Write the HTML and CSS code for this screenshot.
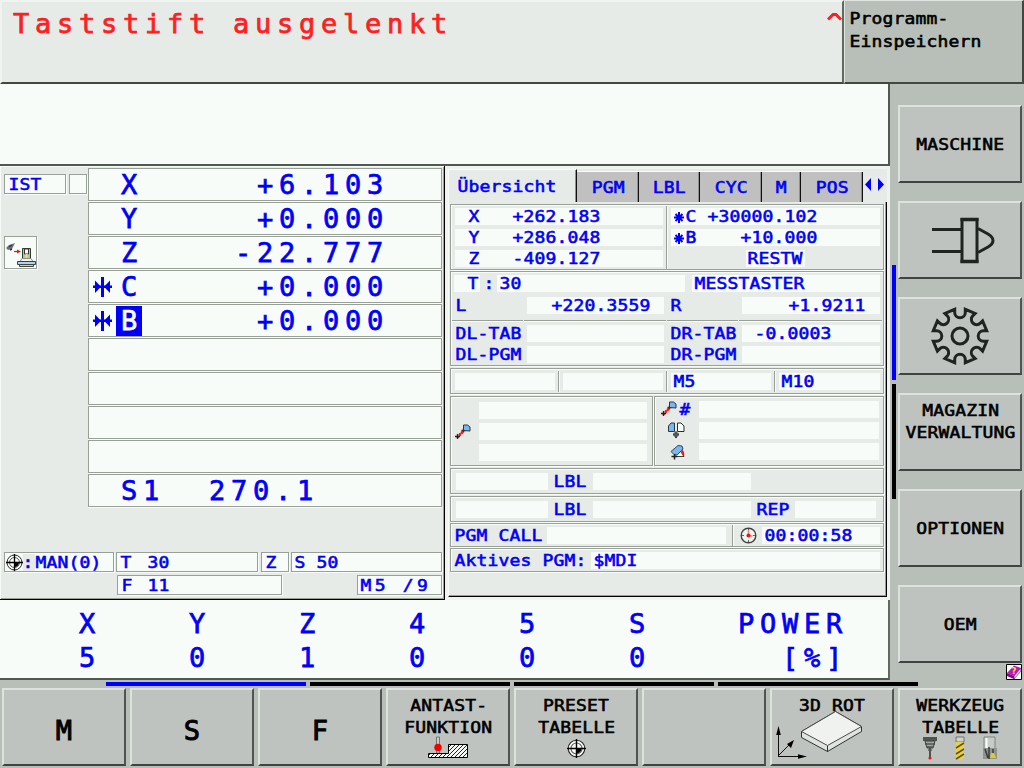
FILE: index.html
```html
<!DOCTYPE html>
<html lang="de">
<head>
<meta charset="utf-8">
<title>Taststift ausgelenkt</title>
<link rel="stylesheet" href="styles.css">
</head>
<body>
<svg class="defs" width="0" height="0">
  <defs>
    <g id="sync"><path d="M8 0h3v20H8zM0 8.5h19v2.500H0z"/><path d="M2 3.500l6 6.200-6 6.200zM17 3.500l-6 6.200 6 6.200z"/></g>
    <g id="star"><path d="M5 0v11M0 5.500h10M1.500 2l7 7M8.500 2l-7 7" fill="none" stroke="#0000f8" stroke-width="2"/></g>
    <g id="probe"><path d="M7 9L13 3" stroke="#f81010" stroke-width="2" stroke-dasharray="2 1" transform="translate(-5 5)"/><path d="M0 12.500h5M2.500 10v5M6.500 6.500h4M8.500 4.500v4" stroke="#202020" stroke-width="1.300"/><path d="M4 11l4-4" stroke="#f81010" stroke-width="2" stroke-dasharray="2.500 .8"/><path d="M8.500 6.500V1h4l2.500 2v4z" fill="#78b8f0" stroke="#283840"/></g>
    <g id="target"><circle cx="8.500" cy="8.500" r="7.500" fill="#f8fcf8" stroke="#282828" stroke-width="1"/><circle cx="8.500" cy="8.500" r="5" fill="none" stroke="#585858" stroke-width="1"/><path d="M8.500 8.500V13a4.500 4.500 0 0 0 4.500-4.500z" fill="#000"/><path d="M8.500 0v17M0 8.500h17" stroke="#000" stroke-width="1.300"/></g>
  </defs>
</svg>
<div class="screen">
  <header class="header">
    <div class="message"><span class="big">Taststift ausgelenkt</span>
      <svg class="caret" width="15" height="9" viewBox="0 0 15 9"><path d="M1 7.500L6 2.500h3l5 5" fill="none" stroke="#fc2020" stroke-width="3"/></svg>
    </div>
    <div class="mode"><span class="t">Programm-</span><span class="t">Einspeichern</span></div>
  </header>

  <div class="middle">
    <main class="work">
      <div class="blank"></div>
      <div class="panels">
        <section class="position">
          <div class="upper">
            <div class="side">
              <div class="ist-row"><div class="box ist"><span class="t">IST</span></div><div class="box small"></div></div>
              <div class="box override">
                <svg width="31" height="31" viewBox="0 0 31 31">
                  <path d="M1 11l3-3 6-2-3 6-4 1z" fill="#707470"/><path d="M4 10l3-2M5 13l2-1" stroke="#303070" stroke-width="1.500"/>
                  <path d="M9 14.500h4" stroke="#f01010" stroke-width="1.200"/><path d="M12 12.500l4 2-4 2z" fill="#f01010"/>
                  <path d="M17.500 21.500v-10h8v10z" fill="#b8bcb8" stroke="#303830"/><path d="M19.500 12h4v5h-4z" fill="#fff" stroke="#303830"/><path d="M20.500 17h2v4h-2z" fill="#e8e870"/>
                  <path d="M15 24.500l2-3h9l2 3z" fill="#f0f4f0" stroke="#889088"/><path d="M12.500 24.500h18v3h-18z" fill="#b8d0f0" stroke="#304050"/><path d="M14.500 27.500h14v2h-14z" fill="#c8ccc8" stroke="#404840"/>
                </svg>
              </div>
            </div>
            <div class="axes">
              <div class="axis"><i></i><b class="big">X</b><span class="big">+6.103</span></div>
              <div class="axis"><i></i><b class="big">Y</b><span class="big">+0.000</span></div>
              <div class="axis"><i></i><b class="big">Z</b><span class="big">-22.777</span></div>
              <div class="axis"><svg class="sync" width="19" height="20"><use href="#sync"/></svg><b class="big">C</b><span class="big">+0.000</span></div>
              <div class="axis"><svg class="sync" width="19" height="20"><use href="#sync"/></svg><b class="big selected">B</b><span class="big">+0.000</span></div>
              <div class="axis"></div><div class="axis"></div><div class="axis"></div><div class="axis"></div>
              <div class="axis spindle"><span class="big">S1  270.1</span></div>
            </div>
          </div>
          <div class="status">
            <div class="box man"><svg width="17" height="17"><use href="#target"/></svg><span class="colon"><span class="t">:</span></span><span class="t">MAN(0)</span></div>
            <div class="box"><span class="t">T</span><span class="t num">30</span></div>
            <div class="box"><span class="t">Z</span></div>
            <div class="box"><span class="t">S 50</span></div>
          </div>
          <div class="status second">
            <div class="box"><span class="t">F</span><span class="t num">11</span></div>
            <div class="box"><span class="t spaced">M5 /9</span></div>
          </div>
        </section>

        <section class="overview">
          <nav class="tabs">
            <div class="tab active"><span class="t">Übersicht</span></div>
            <div class="tab"><span class="t">PGM</span></div>
            <div class="tab"><span class="t">LBL</span></div>
            <div class="tab"><span class="t">CYC</span></div>
            <div class="tab"><span class="t">M</span></div>
            <div class="tab"><span class="t">POS</span></div>
            <svg class="arrows" width="20" height="13" viewBox="0 0 20 13"><path d="M6 0v13L0 6.500zM13 0v13l6-6.500z"/></svg>
          </nav>
          <div class="sheet">
            <div class="group coords">
              <div class="rows">
                <div class="field"><span class="t">X</span><span class="t">+262.183</span></div>
                <div class="field"><span class="t">Y</span><span class="t">+286.048</span></div>
                <div class="field"><span class="t">Z</span><span class="t">-409.127</span></div>
              </div>
              <div class="divider"></div>
              <div class="rows rotary">
                <div class="field"><svg width="10" height="11"><use href="#star"/></svg><span class="t">C</span><span class="t">+30000.102</span></div>
                <div class="field"><svg width="10" height="11"><use href="#star"/></svg><span class="t">B</span><span class="t">   +10.000</span></div>
                <div class="field restw"><span class="t">RESTW</span></div>
              </div>
            </div>

            <div class="group tool">
              <div class="toolname">
                <div class="field tcell"><span class="t">T</span></div><div class="label sep"><span class="t">:</span></div>
                <div class="field txt"><span class="t">30</span></div><i></i><div class="field txt"><span class="t">MESSTASTER</span></div>
              </div>
              <div class="quad">
                <div class="label"><span class="t">L</span></div><div class="field len"><span class="t">+220.3559</span></div>
                <div class="label r"><span class="t">R</span></div><div class="field rad"><span class="t">+1.9211</span></div>
              </div>
              <div class="rule"><i></i><i></i><i></i><i></i></div>
              <div class="quad">
                <div class="label"><span class="t">DL-TAB</span></div><div class="field"></div>
                <div class="label r"><span class="t">DR-TAB</span></div><div class="field delta"><span class="t">-0.0003</span></div>
                <div class="label"><span class="t">DL-PGM</span></div><div class="field"></div>
                <div class="label r"><span class="t">DR-PGM</span></div><div class="field"></div>
              </div>
            </div>

            <div class="group mfunc">
              <div class="field"></div><div class="divider"></div><div class="field"></div><div class="divider"></div>
              <div class="field txt"><span class="t">M5</span></div><div class="divider"></div><div class="field txt"><span class="t">M10</span></div>
            </div>

            <div class="pair">
              <div class="group datum">
                <svg width="16" height="16"><use href="#probe"/></svg>
                <div class="stack"><div class="field"></div><div class="field"></div><div class="field"></div></div>
              </div>
              <div class="group transform">
                <div class="icons">
                  <div class="numbered"><svg width="16" height="16"><use href="#probe"/></svg><span class="t">#</span></div>
                  <svg width="17" height="17" viewBox="0 0 17 17"><path d="M.5 9.500V4L3 1h3.500v8.500z" fill="#78b8f0" stroke="#283840"/><path d="M9.500 9.500V1H13l3 3v5.500z" fill="#f8fcf8" stroke="#283028"/><path d="M8 9.500v6.500M5 12.500h6" stroke="#383838" stroke-width="2"/><circle cx="8" cy="12.500" r="2.500" fill="#585858"/></svg>
                  <svg class="rot" width="16" height="16" viewBox="0 0 16 16"><path d="M4 12.500l6-6 4 6z" fill="#f8fcf8" stroke="#384038"/><path d="M1 7.500L8 1.500 12 2l1 3-6 6-3-.5z" fill="#78b8f0" stroke="#304860"/><path d="M1.500 12.500h6M4.500 10v5.500" stroke="#202020" stroke-width="1.500"/><path d="M11.500 6.500q2 1 2 5" stroke="#f01010" stroke-width="1.800" fill="none"/></svg>
                </div>
                <div class="stack"><div class="field"></div><div class="field"></div><div class="field"></div></div>
              </div>
            </div>

            <div class="group repeat"><div class="field"></div><div class="label"><span class="t">LBL</span></div><div class="field"></div></div>
            <div class="group repeat"><div class="field"></div><div class="label"><span class="t">LBL</span></div><div class="field"></div><div class="label"><span class="t">REP</span></div><div class="field"></div></div>
            <div class="group call">
              <div class="label"><span class="t">PGM CALL</span></div><div class="field"></div><div class="divider"></div>
              <svg width="17" height="17" viewBox="0 0 17 17"><circle cx="8.500" cy="8.500" r="7.300" fill="#f0f4f0" stroke="#404440" stroke-width="1.400"/><path d="M8.500 2v2M8.500 13v2M2 8.500h2M13 8.500h2" stroke="#606460"/><path d="M8.500 3v6h4" fill="none" stroke="#f08080" stroke-width="1.400"/><circle cx="8.500" cy="8.500" r="2" fill="#f81010"/></svg>
              <div class="field txt"><span class="t">00:00:58</span></div>
            </div>
            <div class="group active-pgm"><div class="label"><span class="t">Aktives PGM:</span></div><div class="field txt"><span class="t">$MDI</span></div></div>
          </div>
        </section>
      </div>

      <section class="load">
        <span class="big">X</span><span class="big">Y</span><span class="big">Z</span><span class="big">4</span><span class="big">5</span><span class="big">S</span><span class="big power">POWER</span>
        <span class="big">5</span><span class="big">0</span><span class="big">1</span><span class="big">0</span><span class="big">0</span><span class="big">0</span><span class="big power">[%]</span>
      </section>
    </main>

    <aside class="right">
      <div class="vbars"><i class="on"></i><i></i></div>
      <div class="vkeys">
        <button class="key"><span class="t">MASCHINE</span></button>
        <button class="key">
          <svg class="plug" width="64" height="48" viewBox="0 0 64 48"><g fill="none" stroke="#202420" stroke-width="3"><path d="M1 12.500h29M1 34.500h29M47 11.500l10 5.500q5 3 5 6.500t-5 6.500l-10 5.500"/><rect x="31" y="2.500" width="15" height="42"/><path d="M29.500 2.500h18M29.500 44.500h18" stroke-width="3.500"/></g></svg>
        </button>
        <button class="key">
          <svg class="gear" width="60" height="60" viewBox="-30 -30 60 60"><g fill="none" stroke="#202420" stroke-width="3" stroke-linejoin="miter"><path d="M-5.300-26.700V-23.500A5.300 5.300 0 0 0 5.300-23.500V-26.700L15.100-22.600 12.900-20.400A5.300 5.300 0 0 0 20.400-12.900L22.600-15.100 26.700-5.300H23.500A5.300 5.300 0 0 0 23.500 5.300H26.700L22.600 15.100 20.400 12.900A5.300 5.300 0 0 0 12.900 20.400L15.100 22.600 5.300 26.700V23.500A5.300 5.300 0 0 0-5.300 23.500V26.700L-15.100 22.600-12.900 20.400A5.300 5.300 0 0 0-20.400 12.900L-22.600 15.100-26.700 5.300H-23.500A5.300 5.300 0 0 0-23.500-5.300H-26.700L-22.600-15.100-20.400-12.900A5.300 5.300 0 0 0-12.900-20.400L-15.100-22.600z"/><circle r="8"/></g></svg>
        </button>
        <button class="key top"><span class="t">MAGAZIN</span><span class="t">VERWALTUNG</span></button>
        <button class="key"><span class="t">OPTIONEN</span></button>
        <button class="key"><span class="t">OEM</span></button>
        <svg class="help" width="16" height="16" viewBox="0 0 16 16"><path d="M.5.5h15v15H.5z" fill="#f8fcf8" stroke="#000"/><path d="M1 9l7-7.500L15 4l-7 8z" fill="#c010c0"/><path d="M1 9l7 3v3L1 12z" fill="#800880"/><path d="M8 12l7-8v3l-7 8z" fill="#d8d8d8" stroke="#601060" stroke-width=".6"/><text x="5.500" y="9.500" font-family="DejaVu Sans" font-weight="bold" font-size="8.500" fill="#ffe820">?</text></svg>
      </div>
    </aside>
  </div>

  <footer class="footer">
    <div class="hbars"><i class="on"></i><i></i><i></i><i></i></div>
    <div class="hkeys">
      <button class="key"><span class="big letter">M</span></button>
      <button class="key"><span class="big letter">S</span></button>
      <button class="key"><span class="big letter">F</span></button>
      <button class="key top"><span class="t">ANTAST-</span><span class="t">FUNKTION</span>
        <svg class="raised" width="40" height="23" viewBox="0 0 40 23"><defs><pattern id="hatch" width="4" height="4" patternUnits="userSpaceOnUse"><path d="M-1 5L5-1M-1 1l2-2M3 5l2-2" stroke="#101010" stroke-width=".9"/></pattern></defs><path d="M8.500 1h3v16h-3z" fill="#c8ccc8" stroke="#707870"/><path d="M.5 17.500h20v-9h19v13H.5z" fill="#f4f8f4"/><path d="M.5 17.500h20v-9h19v13H.5z" fill="url(#hatch)" stroke="#000"/><circle cx="10" cy="11.500" r="3.700" fill="#f80000"/></svg>
      </button>
      <button class="key top"><span class="t">PRESET</span><span class="t">TABELLE</span>
        <svg class="preset" width="21" height="21" viewBox="-1 -1 19 19"><use href="#target"/></svg>
      </button>
      <button class="key"></button>
      <button class="key top rot3d"><span class="t">3D ROT</span>
        <svg width="96" height="52" viewBox="0 0 96 52"><path d="M8.500 47.500V22M8 47.500h24M8 47l13-13" stroke="#101010" fill="none"/><path d="M8.500 17l2.300 9H6.200zM37 47.500l-9-2.300v4.600zM24 31l-3 8-4-4z" fill="#000"/><path d="M31.500 22.500L65.500 2.500l26 15v5l-34 20-26-14z" fill="#e0e4e0" stroke="#303430"/><path d="M31.500 22.500l34-20 26 15-34 19z" fill="#f0f2f0" stroke="#484c48"/><path d="M57.500 37v6" stroke="#303430"/></svg>
      </button>
      <button class="key top"><span class="t">WERKZEUG</span><span class="t">TABELLE</span>
        <svg class="raised" width="76" height="24" viewBox="0 0 76 24"><path d="M1 1h14v4H1z" fill="#505450"/><path d="M3 5h10l-2 7H5z" fill="#a0a4a0" stroke="#404440"/><path d="M3 8h10M5 11h6M6 14h4" stroke="#303430"/><path d="M8 12v10" stroke="#505450" stroke-width="2"/><circle cx="8" cy="22" r="1.600" fill="#f81010"/><path d="M34 1h8v5h-8z" fill="#d0d4d0" stroke="#707470"/><path d="M34 6h8v16l-4 2-4-2z" fill="#ecd040"/><path d="M34 12l8-5M34 18l8-5M34 23l8-5" stroke="#585030" stroke-width="1.500"/><path d="M62 1h11v13H62z" fill="#c8ccc8" stroke="#808480"/><path d="M61 12h14v11H61z" fill="#909490"/><path d="M63 13l3 9M67 11v12M71 13v6" stroke="#383c38" stroke-width="1.500"/><path d="M64.500 2v10" stroke="#fff" stroke-width="2"/><path d="M69 17h3l2 5h-6z" fill="#d8cc30"/></svg>
      </button>
    </div>
  </footer>
</div>
</body>
</html>
```

FILE: styles.css
```css
* { box-sizing: border-box; }
body { margin: 0; width: 1024px; height: 768px; overflow: hidden; background: #b8bfb8; color: #0000f8; font-family: "DejaVu Sans Mono", monospace; }
.defs { position: absolute; }
svg { display: block; flex: none; }
i { font-style: normal; display: block; }

/* lettering */
.t { display: block; font-size: 15px; line-height: 17px; letter-spacing: .137px; white-space: pre; transform: translate(.6px, 1px) scaleX(1.2); transform-origin: 0 50%; -webkit-text-stroke: .55px currentColor; }
.big { font-size: 27px; font-weight: normal; line-height: 31px; letter-spacing: 5.75px; white-space: pre; -webkit-text-stroke: .75px currentColor; }

.screen { display: flex; flex-direction: column; width: 1024px; height: 768px; }
.header { display: flex; height: 84px; }
.message { display: flex; justify-content: space-between; width: 844px; padding: 6px 0 0 11px; background: #e7ebe7; color: #fc2020; border: 2px solid #f0f4f0; border-right-color: #606860; border-bottom-color: #404840; }
.caret { margin-top: 4px; }
.mode { display: flex; flex-direction: column; align-items: flex-start; gap: 6px; width: 180px; padding: 9px 0 0 4px; color: #000; border: 1px solid #e0e4e0; border-right: 2px solid #404840; border-bottom: 2px solid #404840; }

.middle { display: flex; height: 596px; }
.work { width: 890px; }
.blank { height: 82px; background: #f8fcf8; border-right: 2px solid #505850; border-bottom: 2px solid #505850; }
.panels { display: flex; height: 434px; background: #f0f4f0; }

/* axis positions */
.position { width: 445px; background: #e7ebe7; border-right: 1px solid #000; border-bottom: 1px solid #000; box-shadow: inset 1px 1px #f8fcf8, inset -1px -1px #98a098; }
.box { display: flex; height: 20px; background: #f8fcf8; border: 1px solid #98a098; box-shadow: 1px 1px #f8fcf8; }
.upper { display: grid; grid-template-columns: 84px 354px; padding: 2px 0 0 4px; }
.side { padding-top: 6px; }
.ist-row { display: flex; gap: 3px; }
.ist { width: 62px; padding: 1px 0 0 3px; }
.small { width: 18px; }
.override { width: 33px; height: 33px; margin-top: 42px; }
.axes { display: grid; grid-auto-rows: 33px; gap: 1px; }
.axis { display: grid; grid-template-columns: 27px 26px 1fr; background: #f8fcf8; border: 1px solid #98a098; box-shadow: 0 1px #f8fcf8; }
.axis > span { justify-self: end; margin-right: 52px; }
.axis b { height: 30px; padding-left: 5px; line-height: 31px; overflow: hidden; }
.axis .selected { background: #0000f8; color: #f8fcf8; margin-top: 1px; line-height: 29px; }
.sync { margin: 6px 0 0 4px; }
.sync, .arrows { fill: #0000f8; }
.axis.spindle { display: block; padding-left: 32px; }
.status { display: grid; grid-template-columns: 110px 142px 28px 151px; column-gap: 2.330px; padding: 45px 0 0 4px; }
.status .box { padding: 1px 0 0 3px; }
.status .box:last-child { padding-left: 2px; }
.status .man { padding: 1px 0 0 1px; }
.man .t { margin-left: -1px; }
.colon { width: 12px; background: #e7ebe7; margin-right: 1px; }
.num { margin-left: 17px; }
.second { grid-template-columns: 165px 85px; column-gap: 75px; padding: 3px 0 0 117px; }
.spaced { letter-spacing: 2.700px; }

/* overview panel */
.overview { display: flex; flex-direction: column; width: 442px; height: 431px; padding: 3px 0 0 3px; }
.tabs { display: flex; align-items: flex-end; height: 33px; background: #e7ebe7; }
.tab { display: flex; justify-content: center; height: 30px; padding-top: 7px; background: #c0c0c0; border-right: 1px solid #101010; box-shadow: inset -1px 0 #909090, 0 -1px #f8fcf8; }
.tab .t { transform-origin: 50% 50%; }
.tab.active { width: 129px; height: 33px; background: #e7ebe7; border-top: 1px solid #f8fcf8; border-left: 1px solid #f8fcf8; justify-content: flex-start; padding: 8px 0 0 8px; box-shadow: inset -1px 0 #909090; }
.tab.active .t { transform-origin: 0 50%; }
.tab:nth-child(2) { width: 62px; }
.tab:nth-child(3) { width: 61px; }
.tab:nth-child(4) { width: 62px; }
.tab:nth-child(5) { width: 39px; }
.tab:nth-child(6) { width: 62px; }
.arrows { align-self: flex-start; margin: 9px 0 0 2px; }
.sheet { width: 439px; height: 395px; padding: 2px 0 0 1px; background: #e7ebe7; border-left: 1px solid #f8fcf8; border-right: 1px solid #000; border-bottom: 1px solid #000; box-shadow: inset -1px -1px #98a098; }
.group { width: 434px; border: 1px solid #98a098; box-shadow: 1px 1px #f8fcf8, inset 1px 1px #f8fcf8; }
.field { display: flex; height: 17px; background: #f8fcf8; }
.label { display: flex; height: 17px; }
.txt { padding-left: 2px; }
.divider { width: 2px; border-left: 1px solid #98a098; border-right: 1px solid #f8fcf8; margin: -2px 0 -2px 3px; }
.coords { display: grid; grid-template-columns: 208px 8px 209px; height: 66px; padding: 3px 0 2px 4px; }
.rows { display: grid; grid-auto-rows: 17px; row-gap: 4px; }
.rows:not(.rotary) .field { display: grid; grid-template-columns: 44px 1fr; padding-left: 13px; }
.rotary .field { display: grid; grid-template-columns: 11px 22px 1fr; padding-left: 2.500px; }
.rotary svg { margin-top: 4px; }
.rotary .restw { display: flex; width: 59px; margin-left: 75px; padding-left: 1px; }
.tool { height: 95px; margin-top: 1px; padding-top: 3px; }
.toolname { display: grid; grid-template-columns: 26px 17px 188px 7px 188px; padding-left: 3px; }
.tcell { padding-left: 13px; }
.sep { padding-left: 3px; }
.quad { display: grid; grid-template-columns: 72px 137px 78px 138px; row-gap: 4px; padding-left: 4px; margin-top: 5px; }
.label.r { padding-left: 6px; }
.len { padding-left: 24px; }
.rad { padding-left: 46px; }
.delta { padding-left: 12px; }
.rule { display: grid; grid-template-columns: 71px 142px 71px 143px; gap: 1px; margin: 6px 0 0 1px; }
.rule i { height: 1px; background: #98a098; box-shadow: 0 1px #f8fcf8; }
.rule + .quad { margin-top: 4px; }
.mfunc { display: grid; grid-template-columns: 100px 8px 100px 8px 100px 8px 101px; height: 26px; margin-top: 2px; padding: 4px 0 3px 4px; }
.pair { display: flex; gap: 1px; width: 434px; margin-top: 2px; }
.stack { display: grid; gap: 4px; align-content: start; }
.datum { display: flex; width: 203px; height: 70px; padding: 5px 0 0 4px; }
.datum svg { margin: 22px 8px 0 0; }
.datum .stack { width: 168px; }
.transform { display: flex; width: 230px; height: 70px; padding: 4px 0 0 6px; }
.transform .icons { width: 38px; }
.transform .icons > svg { margin: 4px 0 0 7px; }
.transform .icons > .rot { margin: 5px 0 0 9px; }
.numbered { display: flex; gap: 2px; height: 17px; }
.transform .stack { width: 180px; }
.repeat { display: grid; grid-template-columns: 92px 45px 158px 44px 81px; height: 26px; margin-top: 2px; padding: 4px 0 0 5px; }
.repeat .label { padding-left: 5px; }
.call { display: grid; grid-template-columns: 93px 179px 14px 22px 118px; height: 24px; margin-top: 1px; padding: 3px 0 3px 3px; }
.call .divider { margin-left: 6px; }
.active-pgm { display: grid; grid-template-columns: 137px 289px; height: 24px; margin-top: 1px; padding: 3px 0 0 3px; }

/* axis load */
.load { display: grid; grid-template-columns: repeat(6, 110px) 1fr; grid-auto-rows: 34px; height: 80px; padding: 8px 40px 0 24px; background: #f8fcf8; border-right: 2px solid #606860; border-bottom: 2px solid #505850; }
.load .big { padding-left: 55px; line-height: 31px; }
.load .power { justify-self: end; padding: 0; }

/* soft keys */
.right { display: flex; gap: 2px; width: 134px; padding-left: 2px; }
.vbars { display: grid; grid-auto-rows: 115px; gap: 4px; width: 4px; padding-top: 181px; align-content: start; }
.vbars i, .hbars i { background: #000; }
.vbars .on, .hbars .on { background: #0000f8; }
.vkeys { display: flex; flex-direction: column; gap: 18px; padding-top: 21px; }
.key { display: flex; flex-direction: column; align-items: center; justify-content: center; width: 124px; height: 78px; margin: 0; padding: 0; font: inherit; color: #000; background: #bfc3bf; border: 2px solid #dce2dc; border-right-color: #505450; border-bottom-color: #404440; flex: none; }
.key .t { transform-origin: 50% 50%; }
.key.top { justify-content: flex-start; padding-top: 4px; }
.key.top .t { line-height: 22px; }
.plug { margin: 2px 0 0 6px; }
.gear { margin-top: -1px; }
.help { align-self: flex-end; margin-top: -17px; }
.footer { height: 88px; padding: 2px 0 0 2px; }
.hbars { display: grid; grid-template-columns: repeat(4, 200px); gap: 4px; height: 4px; padding-left: 104px; }
.hkeys { display: flex; gap: 4px; padding-top: 2px; }
.letter { letter-spacing: 0; -webkit-text-stroke-width: 1px; padding-top: 6px; }
.raised { margin-top: -2px; }
.key.rot3d svg { margin: -7px 0 0 -29px; }
```
